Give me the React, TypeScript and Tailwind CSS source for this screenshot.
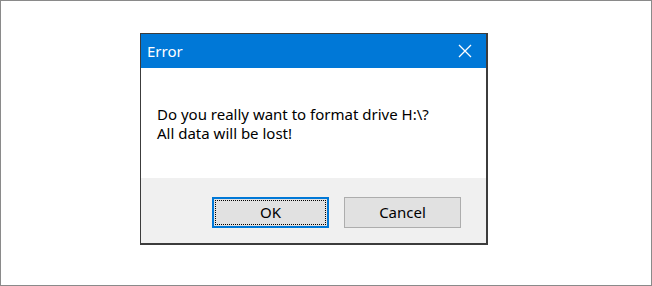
const font = { fontFamily: "'Noto Sans', 'Open Sans', sans-serif" };

function CloseIcon() {
  return (
    <svg width="14" height="14" viewBox="0 0 14 14" className="block">
      <path d="M1 1 L13 13 M13 1 L1 13" stroke="#ffffff" strokeWidth="1.3" fill="none" />
    </svg>
  );
}

export default function App() {
  return (
    <div
      className="w-[652px] h-[286px] bg-white border border-[#8a8a8a] pt-[32px] pl-[139px]"
      style={font}
    >
      <div className="w-[348px] h-[212px] border border-[#3c3c3c] border-r-2 border-b-2 flex flex-col bg-white">
        <div className="h-[34px] bg-[#0078d7] flex items-center justify-between pl-[6px] pr-[14px]">
          <span className="text-white text-[15px] leading-none">Error</span>
          <CloseIcon />
        </div>
        <div className="h-[110px] bg-white pl-[16px] pt-[37px] text-[15px] leading-[19px] text-black">
          <p>Do you really want to format drive H:\?</p>
          <p>All data will be lost!</p>
        </div>
        <div className="flex-1 bg-[#f0f0f0] flex justify-end items-start gap-[15px] pt-[19px] pr-[25px]">
          <button className="w-[117px] h-[31px] bg-[#e1e1e1] border-2 border-[#0078d7] p-[1px] text-[15px] text-black">
            <span className="flex w-full h-full items-center justify-center border border-dotted border-black">
              OK
            </span>
          </button>
          <button className="w-[117px] h-[31px] bg-[#e1e1e1] border border-[#adadad] text-[15px] text-black">
            Cancel
          </button>
        </div>
      </div>
    </div>
  );
}
